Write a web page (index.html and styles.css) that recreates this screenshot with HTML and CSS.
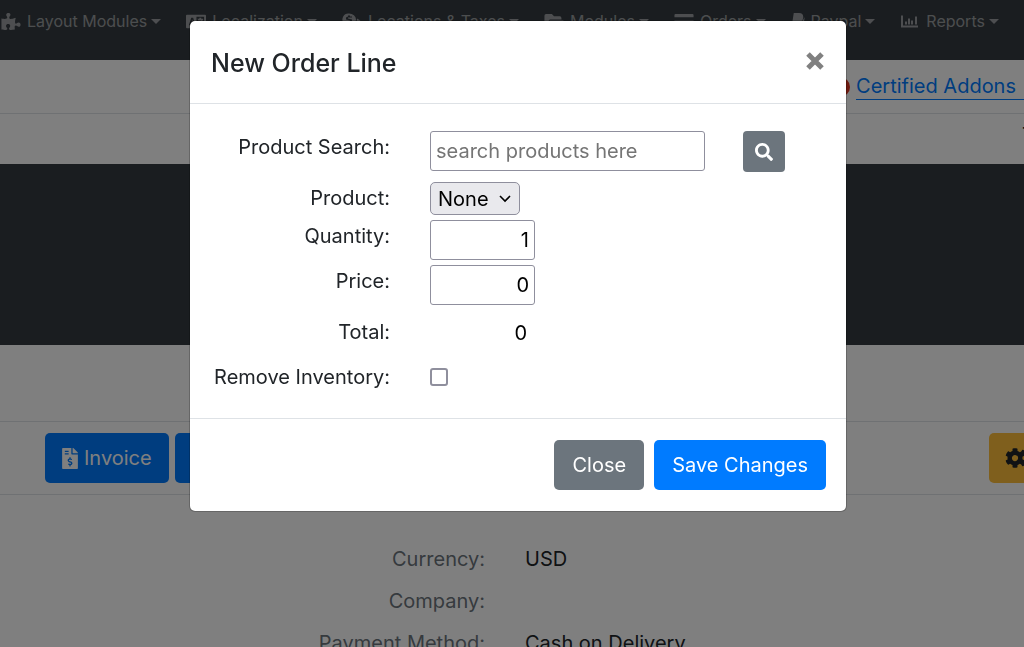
FILE: index.html
```html
<!DOCTYPE html>
<html lang="en">
<head>
  <meta charset="UTF-8">
  <meta name="viewport" content="width=device-width, initial-scale=1.0">
  <title>New Order Line</title>
  <link rel="stylesheet" href="styles.css">
</head>
<body>
  <!-- shared icon shapes -->
  <svg class="sprite" aria-hidden="true">
    <symbol id="gear" viewBox="0 0 512 512">
      <path d="M487.4 315.7l-42.6-24.6c4.3-23.2 4.3-47 0-70.2l42.6-24.6c4.9-2.8 7.1-8.6 5.5-14-11.1-35.6-30-67.8-54.7-94.6-3.8-4.1-10-5.1-14.8-2.3L380.8 110c-17.9-15.4-38.5-27.3-60.8-35.1V25.8c0-5.6-3.9-10.5-9.4-11.7-36.7-8.2-74.3-7.8-109.2 0-5.5 1.2-9.4 6.1-9.4 11.7V75c-22.2 7.9-42.8 19.8-60.8 35.1L88.7 85.5c-4.9-2.8-11-1.9-14.8 2.3-24.7 26.7-43.6 58.9-54.7 94.6-1.7 5.4.6 11.2 5.5 14L67.3 221c-4.3 23.2-4.3 47 0 70.2l-42.6 24.6c-4.9 2.8-7.1 8.6-5.5 14 11.1 35.6 30 67.8 54.7 94.6 3.8 4.1 10 5.1 14.8 2.3l42.6-24.6c17.9 15.4 38.5 27.3 60.8 35.1v49.2c0 5.6 3.9 10.5 9.4 11.7 36.7 8.2 74.3 7.8 109.2 0 5.5-1.2 9.4-6.1 9.4-11.7v-49.2c22.2-7.9 42.8-19.8 60.8-35.1l42.6 24.6c4.9 2.8 11 1.9 14.8-2.3 24.7-26.7 43.6-58.9 54.7-94.6 1.5-5.5-.7-11.3-5.6-14.1zM256 336c-44.1 0-80-35.9-80-80s35.9-80 80-80 80 35.9 80 80-35.9 80-80 80z"/>
    </symbol>
  </svg>

  <nav class="navbar">
    <a href="#" class="nav-link">
      <svg class="icon icon-wide" viewBox="0 0 576 512"><path d="M519.442 288.651c-41.519 0-59.5 31.593-82.058 31.593C377.409 320.244 432 144 432 144s-196.288 80-196.288-3.297c0-35.827 36.288-46.25 36.288-85.985C272 19.216 243.885 0 210.539 0c-34.654 0-66.366 18.891-66.366 56.346 0 41.364 31.711 59.277 31.711 81.75C175.885 207.719 0 166.758 0 166.758v333.237s178.635 41.047 178.635-28.662c0-22.473-40-40.107-40-81.471 0-37.456 29.25-56.346 63.577-56.346 33.673 0 61.788 19.216 61.788 54.717 0 39.735-36.288 50.158-36.288 85.985 0 60.803 129.675 25.73 181.23 25.73 0 0-34.725-120.101 25.827-120.101 35.962 0 46.423 36.152 86.308 36.152C556.712 416 576 387.99 576 354.443c0-34.199-18.962-65.792-56.558-65.792z"/></svg>
      Layout Modules
    </a>
    <a href="#" class="nav-link">
      <svg class="icon icon-wide" viewBox="0 0 21 16"><path fill-rule="evenodd" d="M1 1h19q1 0 1 1v12q0 1-1 1H1q-1 0-1-1V2q0-1 1-1zM11 3v10h8V3zM3 12h2l.5-2h2l.5 2h2L7.500 4h-2zM6 8l.5-2 .5 2z"/><path d="M12 5h2V4h2v1h2v2h-1q-.5 2-1 3l2 1-1 1-2-1-2 1-1-1 2-1-1-2h2l.5 1 .5-2h-3z"/></svg>
      Localization
    </a>
    <a href="#" class="nav-link">
      <svg class="icon icon-wide" viewBox="0 0 20 16"><path fill-rule="evenodd" d="M7 0a7 6 0 1 1 0 12L1 14l1-4A6 6 0 0 1 7 0zM6 2v1L4 4v2l4 1v1H4v1h2v1h2V9l2-1V6L6 5V4h4V3H8V2z"/><path d="M15 5q5 2 4 6l1 4-5-1q-3 1-6-1 6-2 6-8z"/></svg>
      Locations &amp; Taxes
    </a>
    <a href="#" class="nav-link">
      <svg class="icon icon-wide" viewBox="0 0 18 16"><path d="M1.500 1H7l2 2h5.500q1.500 0 1.500 2v1H5L0 12V2.500Q0 1 1.500 1zM5 7h13l-4 7H1z"/></svg>
      Modules
    </a>
    <a href="#" class="nav-link">
      <svg class="icon icon-wide" viewBox="0 0 18 16"><path d="M1 1h16q1 0 1 1v2H0V2q0-1 1-1zM0 7h18v7H0z"/></svg>
      Orders
    </a>
    <a href="#" class="nav-link">
      <svg class="icon icon-narrow" viewBox="0 0 12 16"><path d="M2 0h5q4 0 4 4-.5 5-6 5l-1 4H0zM12 4q1 6-6 7l-1 5H3l1-1 1-5q5 0 7-6z"/></svg>
      Paypal
    </a>
    <a href="#" class="nav-link">
      <svg class="icon icon-wide" viewBox="0 0 20 16"><path d="M1 2h2v10h15v2H1zM5 8h2v3H5zM8 5h2v6H8zM11 7h2v4h-2zM15 3h2v8h-2z"/></svg>
      Reports
    </a>
  </nav>

  <div class="top-bar">
    <svg class="badge" viewBox="0 0 20 20"><circle cx="10" cy="10" r="10"/></svg>
    <a href="#" class="addons">Certified Addons</a>
  </div>
  <div class="notice"><span>Test</span></div>
  <header class="banner"></header>

  <main>
    <div class="toolbar">
      <button type="button" class="btn btn-primary">
        <svg class="btn-icon" viewBox="0 0 384 512"><path d="M377 105L279.1 7c-4.5-4.5-10.6-7-17-7H256v128h128v-6.1c0-6.3-2.5-12.4-7-16.9zm-153 31V0H24C10.7 0 0 10.7 0 24v464c0 13.3 10.7 24 24 24h336c13.3 0 24-10.7 24-24V160H248c-13.2 0-24-10.8-24-24zM64 72c0-4.42 3.58-8 8-8h80c4.42 0 8 3.58 8 8v16c0 4.42-3.58 8-8 8H72c-4.42 0-8-3.58-8-8V72zm0 80v-16c0-4.42 3.58-8 8-8h80c4.42 0 8 3.58 8 8v16c0 4.42-3.58 8-8 8H72c-4.42 0-8-3.58-8-8zm144 263.88V440c0 4.42-3.58 8-8 8h-16c-4.42 0-8-3.58-8-8v-24.290c-11.290-.58-22.270-4.520-31.370-11.350-3.900-2.930-4.100-8.770-.57-12.140l11.750-11.210c2.770-2.640 6.890-2.760 10.130-.73 3.870 2.420 8.260 3.720 12.820 3.720h28.110c6.500 0 11.800-5.920 11.800-13.190 0-5.950-3.610-11.190-8.770-12.730l-45-13.500c-18.590-5.580-31.580-23.420-31.580-43.390 0-24.520 19.050-44.440 42.670-45.070V232c0-4.420 3.580-8 8-8h16c4.420 0 8 3.580 8 8v24.290c11.290.58 22.270 4.510 31.370 11.350 3.900 2.930 4.100 8.770.57 12.140l-11.750 11.210c-2.770 2.640-6.890 2.760-10.130.73-3.870-2.430-8.260-3.720-12.820-3.720h-28.110c-6.500 0-11.800 5.920-11.800 13.190 0 5.950 3.610 11.190 8.770 12.730l45 13.500c18.590 5.580 31.580 23.420 31.580 43.390 0 24.530-19.050 44.440-42.670 45.070z"/></svg>
        Invoice
      </button>
      <button type="button" class="btn btn-primary">Shipping</button>
      <button type="button" class="btn btn-warning" aria-label="Settings">
        <svg class="cogs" viewBox="0 0 26 20">
          <use href="#gear" x="0" y="0" width="20" height="20"/>
          <use href="#gear" x="16" y="0" width="10" height="10"/>
          <use href="#gear" x="16" y="10" width="10" height="10"/>
        </svg>
      </button>
    </div>
    <dl class="details">
      <dt>Currency:</dt>
      <dd>USD</dd>
      <dt>Company:</dt>
      <dd></dd>
      <dt>Payment Method:</dt>
      <dd>Cash on Delivery</dd>
    </dl>
  </main>

  <div class="modal">
    <form class="modal-content" role="dialog" aria-labelledby="modal-title">
      <div class="modal-header">
        <h5 id="modal-title">New Order Line</h5>
        <button type="button" class="close" aria-label="Close dialog">
          <svg viewBox="0 0 18 18"><path d="M2 2l14 14M16 2L2 16"/></svg>
        </button>
      </div>
      <div class="modal-body">
        <div class="row row-search">
          <label for="search">Product Search:</label>
          <div class="field">
            <input type="text" id="search" class="search" placeholder="search products here">
            <button type="button" class="btn-search" aria-label="Search">
              <svg viewBox="0 0 512 512"><path d="M505 442.700L405.300 343c-4.500-4.500-10.600-7-17-7H372c27.600-35.300 44-79.700 44-128C416 93.100 322.900 0 208 0S0 93.100 0 208s93.100 208 208 208c48.300 0 92.700-16.400 128-44v16.300c0 6.400 2.500 12.500 7 17l99.700 99.700c9.400 9.400 24.600 9.400 33.900 0l28.300-28.300c9.400-9.400 9.400-24.600.1-34zM208 336c-70.700 0-128-57.200-128-128 0-70.700 57.200-128 128-128 70.700 0 128 57.200 128 128 0 70.700-57.200 128-128 128z"/></svg>
            </button>
          </div>
        </div>
        <div class="row row-product">
          <label for="product">Product:</label>
          <select id="product">
            <option>None</option>
          </select>
        </div>
        <div class="row">
          <label for="quantity">Quantity:</label>
          <input type="text" id="quantity" class="number" value="1">
        </div>
        <div class="row row-price">
          <label for="price">Price:</label>
          <input type="text" id="price" class="number" value="0">
        </div>
        <div class="row">
          <label for="total">Total:</label>
          <output id="total">0</output>
        </div>
        <div class="row">
          <label for="inventory">Remove Inventory:</label>
          <input type="checkbox" id="inventory">
        </div>
      </div>
      <div class="modal-footer">
        <button type="button" class="btn btn-secondary">Close</button>
        <button type="submit" class="btn btn-primary">Save Changes</button>
      </div>
    </form>
  </div>
</body>
</html>
```
FILE: styles.css
```css
* {
  box-sizing: border-box;
}
body {
  background-color: white;
  color: #212529;
  font-family: Inter, sans-serif;
  font-size: 20px;
  line-height: 30px;
  margin: 0;
  overflow: hidden;
}
button, input, select {
  font: inherit;
}
svg {
  display: block;
  fill: currentColor;
  flex: none;
}
.sprite {
  display: none;
}

/* page behind the modal */
.navbar {
  background-color: #343a40;
  display: flex;
  gap: 25px;
  height: 60px;
  padding: 9px 0 0 1px;
}
.nav-link {
  align-items: center;
  color: rgba(255, 255, 255, 0.5);
  display: flex;
  flex: none;
  font-size: 16px;
  height: 24px;
  text-decoration: none;
}
.nav-link::after {
  border-left: 5px solid transparent;
  border-right: 5px solid transparent;
  border-top: 5px solid;
  content: "";
  margin-left: 4px;
}
.icon {
  height: 17px;
  margin-right: 6px;
}
.icon-wide {
  width: 20px;
}
.icon-narrow {
  width: 14px;
}
.top-bar {
  align-items: center;
  border-bottom: 1px solid #dee2e6;
  display: flex;
  gap: 6px;
  height: 54px;
  justify-content: flex-end;
}
.badge {
  color: #dc3520;
  width: 20px;
}
.addons {
  border-bottom: 1px solid #007bff;
  color: #007bff;
  line-height: 26px;
  padding-right: 8px;
  text-decoration: none;
}
.notice {
  height: 50px;
  padding-left: calc(100% - 2px);
  padding-top: 6px;
}
.banner {
  background-color: #343a40;
  height: 181px;
}
.toolbar {
  border-bottom: 1px solid #dee2e6;
  border-top: 1px solid #dee2e6;
  display: flex;
  gap: 6px;
  margin-top: 76px;
  padding: 11px 0 11px 45px;
}
.details {
  column-gap: 40px;
  display: grid;
  grid-template-columns: 485px 1fr;
  margin: 49px 0 0;
  row-gap: 12px;
}
.details dt {
  color: #6c757d;
  text-align: right;
}
.details dd {
  margin: 0;
}

.btn {
  align-items: center;
  border: none;
  border-radius: 5px;
  color: white;
  cursor: pointer;
  display: flex;
  flex: none;
  gap: 6px;
  height: 50px;
  padding: 0 17px;
}
.btn-primary {
  background-color: #007bff;
}
.btn-secondary {
  background-color: #6c757d;
}
.btn-warning {
  background-color: #ffbf3a;
  color: #212529;
  margin-left: auto;
  margin-right: -23px;
  padding: 0 16px;
}
.btn-icon {
  height: 21px;
  width: 16px;
}
.cogs {
  height: 20px;
  width: 26px;
}

/* modal */
.modal {
  background-color: rgba(0, 0, 0, 0.5);
  inset: 0;
  padding: 20px 0 0 12px;
  position: fixed;
}
.modal-content {
  background-color: white;
  border: 1px solid rgba(0, 0, 0, 0.2);
  border-radius: 6px;
  background-clip: padding-box;
  margin: 0 auto;
  max-width: 658px;
}
.modal-header {
  align-items: flex-start;
  border-bottom: 1px solid #dee2e6;
  display: flex;
  justify-content: space-between;
  padding: 21px 20px 21px 21px;
}
.modal-header h5 {
  font-size: 25px;
  font-weight: 500;
  line-height: 42px;
  margin: 0 0 -2px;
}
.close {
  background: none;
  border: none;
  color: #808080;
  cursor: pointer;
  padding: 10px 2px 8px;
}
.close svg {
  stroke: currentColor;
  stroke-width: 5;
  width: 18px;
}
.modal-body {
  padding: 27px 20px 12px 21px;
}
.row {
  align-items: flex-start;
  column-gap: 40px;
  display: grid;
  grid-template-columns: 179px 1fr;
  justify-items: start;
  min-height: 45px;
}
.row label {
  justify-self: end;
  line-height: 32px;
  white-space: nowrap;
}
.row-search, .row-price {
  min-height: 51px;
}
.row-product {
  min-height: 38px;
}
.field {
  display: flex;
  gap: 38px;
}
.search, .number {
  background-color: white;
  border: 1px solid #8f8f9d;
  border-radius: 3px;
  color: black;
  height: 40px;
  padding: 0 5px;
}
.search {
  width: 275px;
}
.search::placeholder {
  color: #757575;
}
.number {
  text-align: right;
  width: 105px;
}
.btn-search {
  background-color: #6c757d;
  border: none;
  border-radius: 4px;
  color: white;
  cursor: pointer;
  height: 41px;
  padding: 0 12px;
}
.btn-search svg {
  width: 18px;
}
select {
  appearance: none;
  background: #e9e9ed url("data:image/svg+xml,%3Csvg xmlns='http://www.w3.org/2000/svg' width='12' height='8'%3E%3Cpath d='M1 1l5 5 5-5' fill='none' stroke='black' stroke-width='1.6'/%3E%3C/svg%3E") no-repeat right 8px center;
  border: 1px solid #8f8f9d;
  border-radius: 5px;
  color: black;
  height: 33px;
  padding: 0 30px 0 7px;
}
output {
  color: black;
  line-height: 34px;
  padding-right: 8px;
  text-align: right;
  width: 105px;
}
input[type="checkbox"] {
  appearance: none;
  border: 2px solid #8f8f9d;
  border-radius: 3px;
  height: 18px;
  margin: 7px 0 0;
  width: 18px;
}
.modal-footer {
  border-top: 1px solid #dee2e6;
  display: flex;
  gap: 10px;
  justify-content: flex-end;
  padding: 21px 20px;
}
.modal-footer .btn {
  padding: 0 18px;
}
```
